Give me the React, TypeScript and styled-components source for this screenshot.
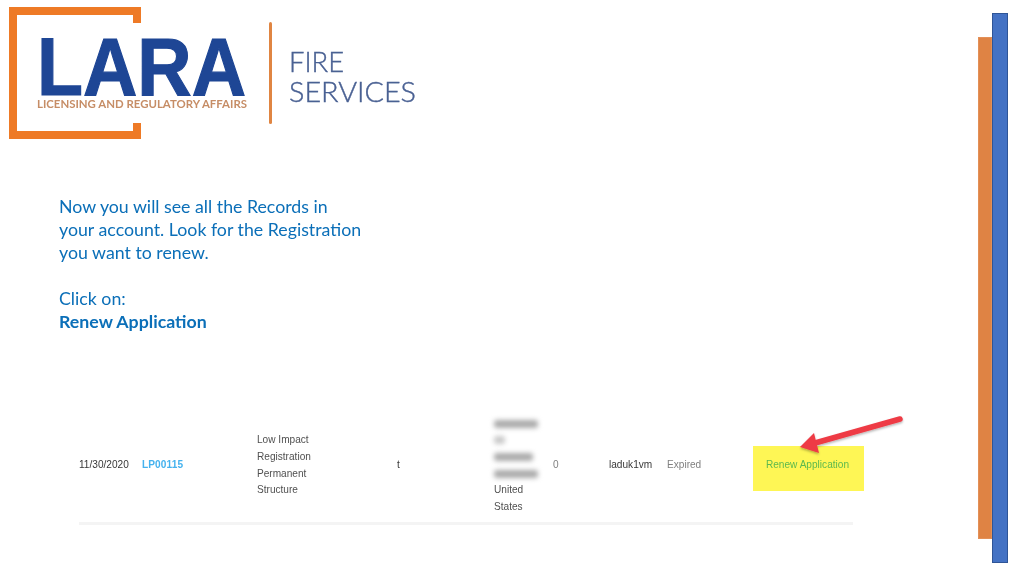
import React from 'react';
import styled, { createGlobalStyle } from 'styled-components';

const Global = createGlobalStyle`
  html, body {
    margin: 0;
    padding: 0;
    background: #ffffff;
  }
`;

const Slide = styled.div`
  width: 1024px;
  height: 576px;
  display: flex;
  overflow: hidden;
  background: #ffffff;
`;

const Main = styled.main`
  flex: 1;
  min-width: 0;
  display: flex;
  flex-direction: column;
`;

const AccentBars = styled.aside`
  display: flex;
  align-items: center;
  padding-right: 16px;
`;

const Bar = styled.div<{ $w: number; $h: number; $color: string; $edge: string }>`
  box-sizing: border-box;
  width: ${p => p.$w}px;
  height: ${p => p.$h}px;
  background: ${p => p.$color};
  border: 1px solid ${p => p.$edge};
`;

const Logo = styled.svg`
  display: block;
  flex: none;
  width: 430px;
  height: 150px;
  filter: blur(0.4px);
`;

const Intro = styled.div`
  margin: 45px 0 0 59px;
  width: 340px;
  font-family: Lato, 'Open Sans', 'Liberation Sans', sans-serif;
  font-size: 17.75px;
  line-height: 23px;
  color: #0b6fb8;
  filter: blur(0.2px);
`;

const Spacer = styled.div`
  height: 23px;
`;

const Strong = styled.div`
  font-weight: 700;
`;

const Table = styled.div`
  position: relative;
  margin: 76px 0 0 79px;
  width: 774px;
  font-family: 'Liberation Sans', Arial, sans-serif;
  font-size: 10.1px;
  line-height: 16.8px;
  color: #505050;
  filter: blur(0.35px);
`;

const Row = styled.div`
  display: grid;
  grid-template-columns: 63px 115px 140px 97px 59px 56px 58px 86px 100px;
  align-items: center;
  height: 113px;
  border-bottom: 3px solid #f4f4f4;
`;

const Link = styled.span`
  font-weight: 700;
  color: #45b2ee;
  letter-spacing: 0.1px;
`;

const Muted = styled.span`
  color: #808080;
`;

const Dark = styled.span`
  color: #383838;
`;

const Stack = styled.div`
  display: flex;
  flex-direction: column;
`;

const Redacted = styled.span<{ $w: number; $tone?: string }>`
  display: block;
  width: ${p => p.$w}px;
  height: 8px;
  margin: 4.4px 0;
  border-radius: 3px;
  background: ${p => p.$tone || '#aaaaaa'};
  filter: blur(2.4px);
`;

const Highlight = styled.div`
  box-sizing: border-box;
  width: 111px;
  height: 45px;
  margin-top: 6px;
  padding: 0 2px 7px 0;
  display: flex;
  align-items: center;
  justify-content: center;
  background: #fef655;
  color: #5cb94e;
`;

const Arrow = styled.svg`
  position: absolute;
  left: 710px;
  top: 7px;
  width: 130px;
  height: 50px;
  overflow: visible;
`;

export default function App() {
  return (
    <Slide>
      <Global />
      <Main>
        <Logo viewBox="0 0 430 150">
          <path d="M137 23V11H13V135H137V123" fill="none" stroke="#ee7a26" strokeWidth="8" />
          <text x="37" y="95" fontFamily="'Liberation Sans', sans-serif" fontWeight="700" fontSize="81" fill="#1e4695" stroke="#1e4695" strokeWidth="1.2" textLength="209" lengthAdjust="spacingAndGlyphs">LARA</text>
          <text x="37" y="108" fontFamily="Lato, 'Liberation Sans', sans-serif" fontWeight="700" fontSize="11.2" fill="#c68d66" textLength="210" lengthAdjust="spacingAndGlyphs">LICENSING AND REGULATORY AFFAIRS</text>
          <rect x="269" y="22" width="3" height="102" rx="1.5" fill="#e08542" />
          <text x="289" y="72" fontFamily="Lato, 'Liberation Sans', sans-serif" fontWeight="300" fontSize="28" fill="#4a6193" stroke="#4a6193" strokeWidth="0.4" textLength="55" lengthAdjust="spacingAndGlyphs">FIRE</text>
          <text x="289" y="102" fontFamily="Lato, 'Liberation Sans', sans-serif" fontWeight="300" fontSize="28" fill="#4a6193" stroke="#4a6193" strokeWidth="0.4" textLength="127" lengthAdjust="spacingAndGlyphs">SERVICES</text>
        </Logo>
        <Intro>
          Now you will see all the Records in
          <br />
          your account. Look for the Registration
          <br />
          you want to renew.
          <Spacer />
          Click on:
          <Strong>Renew Application</Strong>
        </Intro>
        <Table>
          <Row>
            <Dark>11/30/2020</Dark>
            <Link>LP00115</Link>
            <Stack>
              <span>Low Impact</span>
              <span>Registration</span>
              <span>Permanent</span>
              <span>Structure</span>
            </Stack>
            <Dark>t</Dark>
            <Stack>
              <Redacted $w={44} />
              <Redacted $w={11} $tone="#c8c8c8" />
              <Redacted $w={39} />
              <Redacted $w={44} />
              <span>United</span>
              <span>States</span>
            </Stack>
            <Muted>0</Muted>
            <Dark>laduk1vm</Dark>
            <Muted>Expired</Muted>
            <Highlight>Renew Application</Highlight>
          </Row>
          <Arrow viewBox="0 0 130 50">
            <defs>
              <filter id="arrowShadow" x="-10%" y="-30%" width="120%" height="170%">
                <feDropShadow dx="0" dy="1.5" stdDeviation="1.2" floodColor="#000" floodOpacity="0.3" />
              </filter>
            </defs>
            <g filter="url(#arrowShadow)" fill="#ee3b45">
              <path d="M111 3L26 27" stroke="#ee3b45" strokeWidth="5.5" strokeLinecap="round" />
              <path d="M25 17L11 31 30 37Z" />
            </g>
          </Arrow>
        </Table>
      </Main>
      <AccentBars>
        <Bar $w={14} $h={502} $color="#df8344" $edge="#e39058" />
        <Bar $w={16} $h={550} $color="#4472c4" $edge="#2f5597" />
      </AccentBars>
    </Slide>
  );
}
